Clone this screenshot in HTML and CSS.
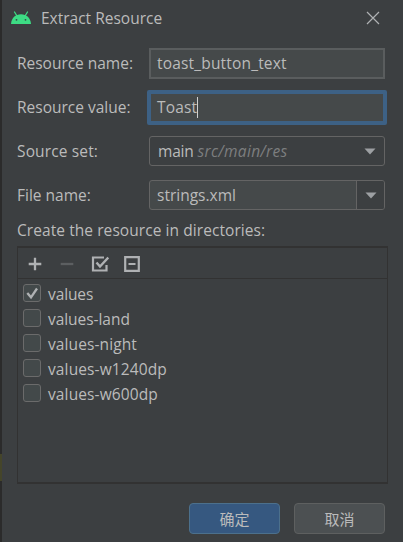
FILE: index.html
```
<!DOCTYPE html>
<html lang="zh-CN">
<head>
<meta charset="utf-8">
<title>Extract Resource</title>
<link rel="stylesheet" href="styles.css">
</head>
<body>
<div class="dialog">
  <header class="titlebar">
    <svg class="android" width="20" height="14" viewBox="0 0 20 14"><path d="M3.500 1 6 5M16.500 1 14 5" stroke="#3ddc84" stroke-width="1.300" stroke-linecap="round"/><path d="M0 13C.4 7 4.500 3.300 10 3.300S19.600 7 20 13Z" fill="#3ddc84"/><circle cx="5.500" cy="8.800" r=".9" fill="#37474f"/><circle cx="14.500" cy="8.800" r=".9" fill="#37474f"/></svg>
    <h1><span class="t-title">Extract Resource</span></h1>
    <svg class="close" width="14" height="14" viewBox="0 0 14 14"><path d="M1 1 13 13M13 1 1 13" stroke="#afb1b3" stroke-width="1.200"/></svg>
  </header>
  <main>
    <div class="row"><label class="t-name">Resource name:</label><div class="field"><span class="t-toast">toast_button_text</span></div></div>
    <div class="row"><label class="t-value">Resource value:</label><div class="field focused"><span class="t-short">Toast</span><i class="caret"></i></div></div>
    <div class="row"><label class="t-source">Source set:</label><div class="field select"><span class="t-main">main</span><em>src/main/res</em><div class="arrow"><svg width="12" height="7" viewBox="0 0 12 7"><path d="M.5.5h11L6 6.500Z" fill="#9da0a3"/></svg></div></div></div>
    <div class="row"><label class="t-file">File name:</label><div class="field select editable"><span class="t-strings">strings.xml</span><div class="arrow"><svg width="12" height="7" viewBox="0 0 12 7"><path d="M.5.5h11L6 6.500Z" fill="#9da0a3"/></svg></div></div></div>
    <p class="caption"><span class="t-create">Create the resource in directories:</span></p>
    <section class="panel">
      <div class="toolbar">
        <svg width="16" height="16" viewBox="0 0 16 16"><path d="M8 1.700v12.600M1.700 8h12.600" stroke="#afb1b3" stroke-width="2.300"/></svg>
        <svg width="16" height="16" viewBox="0 0 16 16"><path d="M1.700 8h12.600" stroke="#5c5f61" stroke-width="2.300"/></svg>
        <svg width="18" height="16" viewBox="0 0 18 16"><path d="M13 1.500H2v13h13.500V9" fill="none" stroke="#afb1b3" stroke-width="2.200"/><path d="m5.500 6.500 3.500 4L17.300 1.500" fill="none" stroke="#afb1b3" stroke-width="2.400"/></svg>
        <svg class="uncheck" width="16" height="16" viewBox="0 0 16 16"><path d="M1.200 1.200h13.600v13.600h-13.600ZM4.500 8h7" fill="none" stroke="#afb1b3" stroke-width="2.200"/></svg>
      </div>
      <ul>
        <li><i class="box"><svg width="16" height="16" viewBox="0 0 16 16"><path d="M3.300 8 7 12.300 13 3.500" fill="none" stroke="#afb1b3" stroke-width="2.300"/></svg></i><span class="t-v1">values</span></li>
        <li><i class="box"></i><span class="t-v2">values-land</span></li>
        <li><i class="box"></i><span class="t-v3">values-night</span></li>
        <li><i class="box"></i><span class="t-v4">values-w1240dp</span></li>
        <li><i class="box"></i><span class="t-v5">values-w600dp</span></li>
      </ul>
    </section>
    <footer><button class="primary">确定</button><button>取消</button></footer>
  </main>
</div>
</body>
</html>
```
FILE: styles.css
```
* { box-sizing: border-box; }
body { margin: 0; padding-left: 2px; background: linear-gradient(#2b2b2b 454px, #45452a 454px, #45452a 481px, #2b2b2b 481px); color: #bbbbbb; font: 15.5px/20px "Open Sans", "Noto Sans CJK SC", sans-serif; }
.dialog { width: 401px; height: 542px; background: #3c3f41; overflow: hidden; }
svg { display: block; flex: none; }
.titlebar { display: flex; align-items: center; height: 36px; padding: 0 23px 0 9px; }
h1 { margin: 0 auto 0 10px; font-size: inherit; font-weight: 400; }
main { padding: 5px 15px 0; }
.row { display: flex; align-items: center; height: 44px; }
label { width: 132px; flex: none; white-space: nowrap; }
.field { display: flex; align-items: center; width: 236px; height: 31px; padding-left: 6px; border: 2px solid #5a5d5e; background: #45494a; white-space: nowrap; }
.focused { width: 240px; height: 35px; margin-left: -2px; padding-left: 6px; border: 4px solid #3d6185; border-radius: 2px; }
.caret { width: 1px; height: 21px; background: #d0d0d0; }
.select { height: 30px; margin-top: -1px; border: 1px solid #646464; border-radius: 3px; background: #3c3f41; padding-left: 8px; }
.editable { background: #45494a; padding-left: 7px; }
em { color: #7c7e7f; margin-left: 4px; letter-spacing: .3px; }
.arrow { display: flex; align-items: center; justify-content: center; width: 28px; height: 28px; padding-top: 2px; margin-left: auto; }
.editable .arrow { border-left: 1px solid #646464; background: #3c3f41; border-radius: 0 2px 2px 0; }
.caption { margin: 3px 0 0; height: 30px; line-height: 20px; }
.panel { width: 371px; height: 238px; margin-top: -4px; border: 1px solid #323232; border-top-width: 2px; border-bottom-width: 2px; }
.toolbar { display: flex; align-items: center; gap: 16px; height: 31px; padding: 1px 0 0 9px; border-bottom: 1px solid #323232; }
.uncheck { margin-left: -1px; }
ul { list-style: none; margin: 0; padding: 2px 0 0 5px; }
li { display: flex; align-items: center; height: 25px; }
.box { width: 18px; height: 18px; margin: -2px 7px 0 0; border: 1px solid #6b6b6b; border-radius: 3px; background: #43494a; }
footer { display: flex; justify-content: flex-end; gap: 14px; padding: 19px 3px 0 0; }
button { width: 91px; height: 31px; padding: 0; border: 1px solid #5e6060; border-radius: 4px; background: #4c5052; color: #bbbbbb; font: inherit; font-size: 15px; }
.primary { border-color: #4c708c; background: #365880; }
.t-name { letter-spacing: -.02px; }
.t-toast { letter-spacing: .18px; }
.t-short { letter-spacing: .15px; }
.t-source { letter-spacing: .14px; }
.t-main { letter-spacing: -.2px; }
.t-create { letter-spacing: .07px; }
.t-v1 { letter-spacing: -.1px; }
.t-v2 { letter-spacing: -.05px; }
.t-v3 { letter-spacing: .1px; }
.t-v4 { letter-spacing: .12px; }
.t-v5 { letter-spacing: .12px; }
```
